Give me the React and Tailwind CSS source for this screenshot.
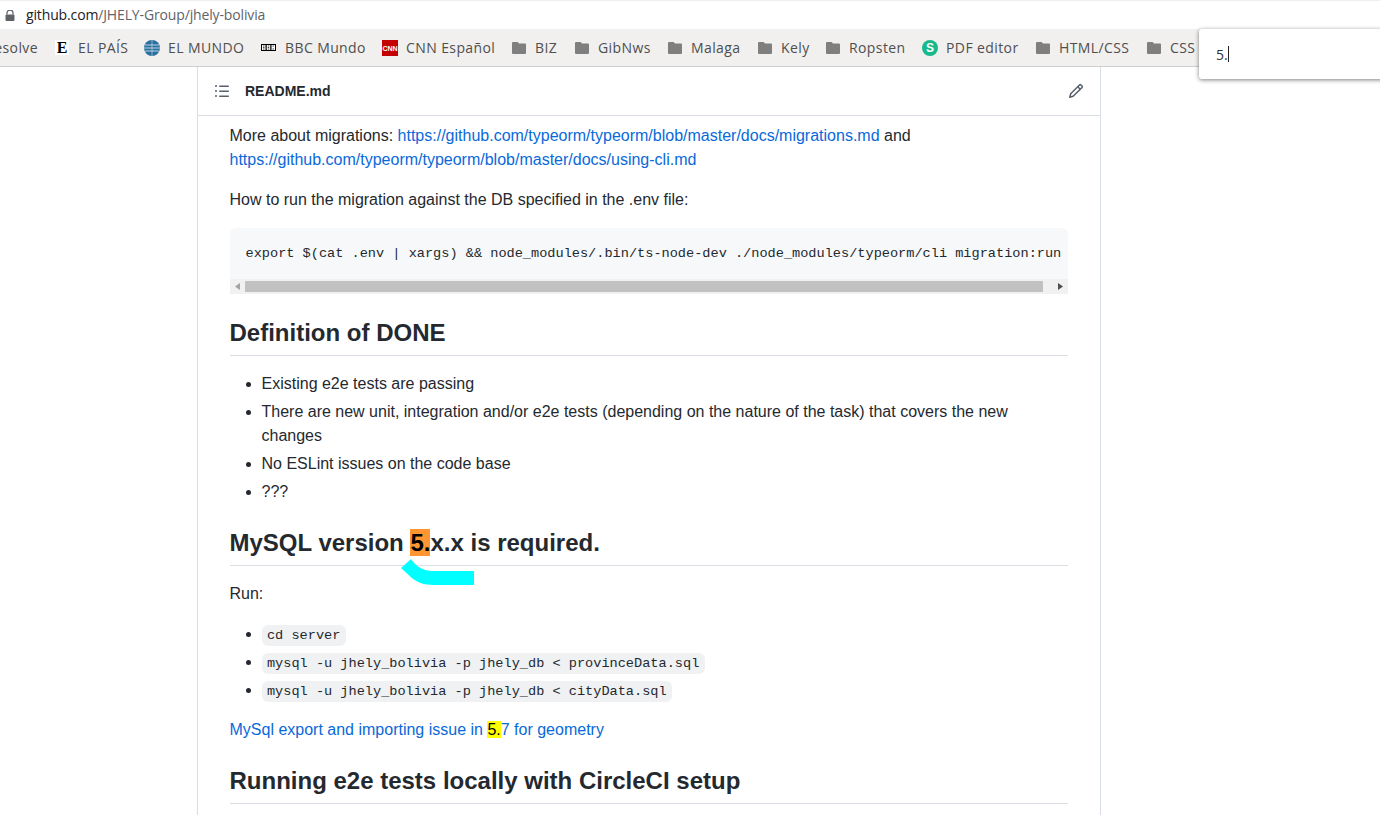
import React from "react";

const Folder = () => (
  <svg width="14" height="12" viewBox="0 0 14 12" className="shrink-0">
    <path d="M1 0h4.6l1.4 1.6h6a1 1 0 0 1 1 1V11a1 1 0 0 1-1 1H1a1 1 0 0 1-1-1V1a1 1 0 0 1 1-1Z" fill="#7f7f7f" />
  </svg>
);
const Globe = () => (
  <svg width="16" height="16" viewBox="0 0 16 16" className="shrink-0">
    <circle cx="8" cy="8" r="8" fill="#2a6f9e" />
    <path d="M1 5h14M0 8h16M1 11h14" stroke="#cfdfea" strokeWidth="0.9" />
    <path d="M8 0v16" stroke="#cfdfea" strokeWidth="0.6" />
  </svg>
);
const ElPais = () => (
  <span className="shrink-0 w-[14px] h-[15px] bg-white flex items-center justify-center text-[16px] leading-none font-bold text-black font-['Liberation_Serif',serif]">E</span>
);
const Bbc = () => (
  <svg width="15" height="7" viewBox="0 0 15 7" className="shrink-0">
    <rect width="15" height="7" fill="#000" />
    <rect x="1" y="1" width="3.500" height="5" fill="#fff" />
    <rect x="5.750" y="1" width="3.500" height="5" fill="#fff" />
    <rect x="10.500" y="1" width="3.500" height="5" fill="#fff" />
    <path d="M2 2h1.500M2 3.500h1.500M2 5h1.500M6.750 2h1.500M6.750 3.500h1.500M6.750 5h1.500M11.500 2h1.500M11.500 5h1.500" stroke="#000" strokeWidth="0.7" />
  </svg>
);
const Cnn = () => (
  <span className="shrink-0 w-[16px] h-[16px] bg-[#c40000] flex items-center justify-center pt-[2px] text-[7px] font-bold leading-none text-white font-['Liberation_Sans',sans-serif]">CNN</span>
);
const Sejda = () => (
  <span className="shrink-0 w-[16px] h-[16px] rounded-full bg-[#16b989] flex items-center justify-center text-[12px] font-bold leading-none text-white font-['Liberation_Sans',sans-serif]">S</span>
);

const marks = [
  { icon: <ElPais />, slot: "w-[15px]", label: "EL PAÍS", w: "w-[50px]" },
  { icon: <Globe />, slot: "w-[16px]", label: "EL MUNDO", w: "w-[77px]" },
  { icon: <Bbc />, slot: "w-[16px]", label: "BBC Mundo", w: "w-[81px]" },
  { icon: <Cnn />, slot: "w-[16px]", label: "CNN Español", w: "w-[90px]" },
  { icon: <Folder />, slot: "w-[15px]", label: "BIZ", w: "w-[24px]" },
  { icon: <Folder />, slot: "w-[15px]", label: "GibNws", w: "w-[54px]" },
  { icon: <Folder />, slot: "w-[15px]", label: "Malaga", w: "w-[51px]" },
  { icon: <Folder />, slot: "w-[15px]", label: "Kely", w: "w-[29px]" },
  { icon: <Folder />, slot: "w-[15px]", label: "Ropsten", w: "w-[57px]" },
  { icon: <Sejda />, slot: "w-[16px]", label: "PDF editor", w: "w-[74px]" },
  { icon: <Folder />, slot: "w-[15px]", label: "HTML/CSS", w: "w-[72px]" },
  { icon: <Folder />, slot: "w-[15px]", label: "CSS", w: "w-[26px]" },
];

const A = ({ children }) => <a className="text-[#0969da]">{children}</a>;
const Code = ({ children }) => (
  <code className="font-['Liberation_Mono',monospace] text-[13.6px] leading-none bg-[#afb8c133] px-[5.44px] py-[2.72px] rounded-md">{children}</code>
);
const H2 = ({ children, className = "" }) => (
  <h2 className={`text-2xl leading-[30px] font-bold pb-[7px] border-b border-[#d8dee4] mb-4 ${className}`}>{children}</h2>
);

export default function App() {
  return (
    <div className="relative w-[1380px] h-[815px] overflow-hidden bg-white font-['Liberation_Sans',sans-serif] text-[#24292f]">
      {/* Address bar */}
      <div className="h-[29px] border-t border-[#eeeeee] flex items-center pl-[5px] gap-[11px]">
        <svg width="10" height="11" viewBox="0 0 10 11">
          <path d="M2 4.500V3a3 3 0 0 1 6 0v1.500" stroke="#5f6368" strokeWidth="1.300" fill="none" />
          <rect x="0.500" y="4.500" width="9" height="6.500" rx="1" fill="#5f6368" />
        </svg>
        <div className="text-[14px] leading-none whitespace-nowrap font-['Open_Sans',sans-serif] tracking-[-0.14px]">
          <span className="text-[#202124]">github.com</span>
          <span className="text-[#5f6368]">/JHELY-Group/jhely-bolivia</span>
        </div>
      </div>

      {/* Bookmarks bar */}
      <div className="h-[38px] bg-[#f1f0ee] border-b border-[#cfcfcf] flex items-center overflow-hidden text-[14px] text-[#4f4f4f] font-['Open_Sans',sans-serif] whitespace-nowrap">
        <span className="w-[38px] mr-[17px] flex justify-end shrink-0 overflow-hidden tracking-[0.4px]">esolve</span>
        {marks.map((m) => (
          <div key={m.label} className="flex items-center gap-[8px] mr-[16px] shrink-0">
            <span className={`${m.slot} flex items-center`}>{m.icon}</span>
            <span className={`${m.w} block tracking-[0.4px]`}>{m.label}</span>
          </div>
        ))}
      </div>

      {/* README card */}
      <div className="ml-[197px] w-[904px] h-[748px] border-x border-[#d8dee4]">
        <div className="h-[49px] border-b border-[#d8dee4] flex items-center pl-[16px] pr-[16px]">
          <svg width="16" height="16" viewBox="0 0 16 16" fill="#57606a" className="mr-[15px]">
            <path d="M5.750 2.500h8.500a.750.750 0 0 1 0 1.500h-8.500a.750.750 0 0 1 0-1.500Zm0 5h8.500a.750.750 0 0 1 0 1.500h-8.500a.750.750 0 0 1 0-1.500Zm0 5h8.500a.750.750 0 0 1 0 1.500h-8.500a.750.750 0 0 1 0-1.500ZM2 14a1 1 0 1 1 0-2 1 1 0 0 1 0 2Zm1-6a1 1 0 1 1-2 0 1 1 0 0 1 2 0ZM2 4a1 1 0 1 1 0-2 1 1 0 0 1 0 2Z" />
          </svg>
          <span className="text-sm font-bold">README.md</span>
          <svg width="16" height="16" viewBox="0 0 16 16" fill="#57606a" className="ml-auto">
            <path d="M11.013 1.427a1.750 1.750 0 0 1 2.474 0l1.086 1.086a1.750 1.750 0 0 1 0 2.474l-8.610 8.610c-.210.210-.470.364-.756.445l-3.251.930a.750.750 0 0 1-.927-.928l.929-3.250c.081-.286.235-.547.445-.758l8.610-8.610Zm.176 4.823L9.750 4.810l-6.286 6.287a.253.253 0 0 0-.064.108l-.558 1.953 1.953-.558a.253.253 0 0 0 .108-.064Zm1.238-3.763a.250.250 0 0 0-.354 0L10.811 3.750l1.439 1.440 1.263-1.263a.250.250 0 0 0 0-.354Z" />
          </svg>
        </div>

        <div className="pl-[31.500px] pr-[32.500px] pt-[8px] text-base leading-6">
          <p className="mb-4">
            More about migrations: <A>https://github.com/typeorm/typeorm/blob/master/docs/migrations.md</A> and{" "}
            <A>https://github.com/typeorm/typeorm/blob/master/docs/using-cli.md</A>
          </p>
          <p className="mb-[16px]">How to run the migration against the DB specified in the .env file:</p>

          <div className="rounded-t-md overflow-hidden bg-[#f6f8fa] mb-6">
            <pre className="h-[51px] pl-4 pt-[16px] font-['Liberation_Mono',monospace] text-[13.6px] leading-5 overflow-hidden">
              export $(cat .env | xargs) &amp;&amp; node_modules/.bin/ts-node-dev ./node_modules/typeorm/cli migration:run
            </pre>
            <div className="h-[15px] bg-[#f1f1f1] flex items-center">
              <span className="w-[15px] flex justify-center">
                <svg width="5" height="7" viewBox="0 0 5 7"><path d="M5 0v7L0 3.500Z" fill="#a3a3a3" /></svg>
              </span>
              <span className="flex-1 h-[11px] bg-[#c1c1c1]" />
              <span className="w-[25px] flex justify-end pr-[5px]">
                <svg width="5" height="7" viewBox="0 0 5 7"><path d="M0 0v7l5-3.500Z" fill="#505050" /></svg>
              </span>
            </div>
          </div>

          <H2>Definition of DONE</H2>
          <ul className="list-disc pl-8 mb-6">
            <li>Existing e2e tests are passing</li>
            <li className="mt-1">There are new unit, integration and/or e2e tests (depending on the nature of the task) that covers the new changes</li>
            <li className="mt-1">No ESLint issues on the code base</li>
            <li className="mt-1">???</li>
          </ul>

          <H2>
            MySQL version <span className="bg-[#ff9632] text-black">5.</span>x.x is required.
          </H2>
          <p className="mb-4">Run:</p>
          <ul className="list-disc pl-8 mb-4">
            <li><Code>cd server</Code></li>
            <li className="mt-1"><Code>mysql -u jhely_bolivia -p jhely_db &lt; provinceData.sql</Code></li>
            <li className="mt-1"><Code>mysql -u jhely_bolivia -p jhely_db &lt; cityData.sql</Code></li>
          </ul>
          <p className="mb-6">
            <A>MySql export and importing issue in <span className="bg-[#ffff00] text-black">5.</span>7 for geometry</A>
          </p>
          <H2>Running e2e tests locally with CircleCI setup</H2>
        </div>
      </div>

      {/* Cyan annotation */}
      <svg width="76" height="30" viewBox="0 0 76 30" className="absolute left-[400px] top-[558px]">
        <path d="M1 10 11 1c5 7 10 11 20 12h43v14H34c-11 0-16-3-21-6Z" fill="#00ffff" />
      </svg>

      {/* Find box */}
      <div className="absolute left-[1199px] top-[29px] w-[190px] h-[50px] bg-white rounded-bl-[3px] rounded-tl-[3px] shadow-[0_1px_4px_rgba(0,0,0,0.5)] flex items-center pl-[17px] text-[14px] text-[#333] font-['Open_Sans',sans-serif]">
        5.<span className="w-px h-[16px] bg-[#222]" />
      </div>
    </div>
  );
}
